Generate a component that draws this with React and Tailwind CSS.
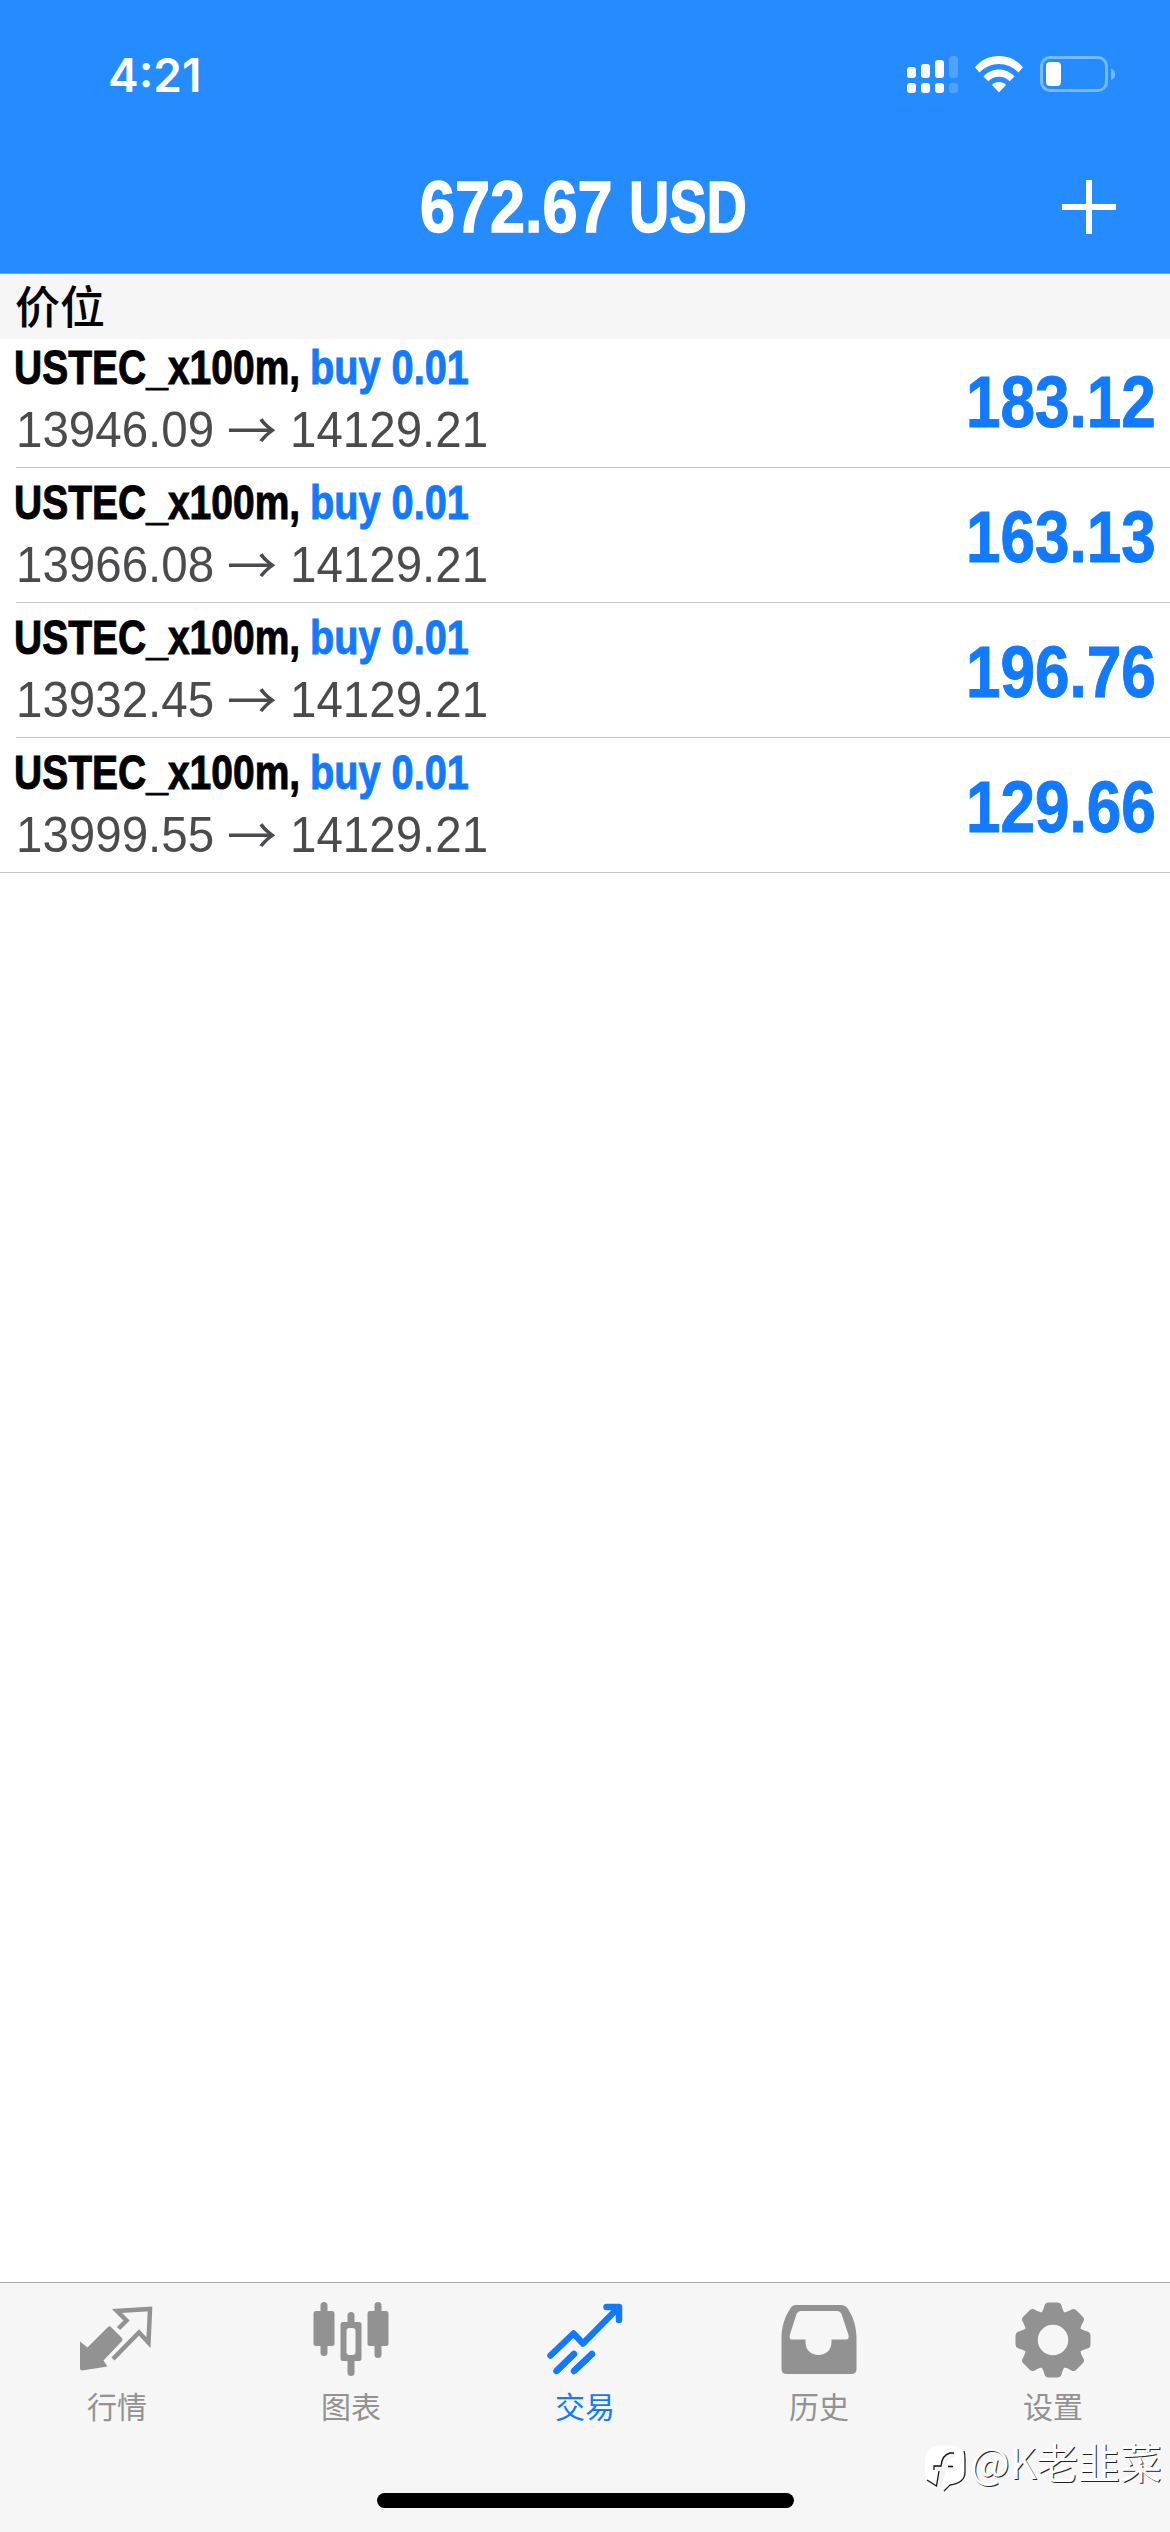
import React from "react";

const positions = [
  { open: "13946.09", now: "14129.21", profit: "183.12" },
  { open: "13966.08", now: "14129.21", profit: "163.13" },
  { open: "13932.45", now: "14129.21", profit: "196.76" },
  { open: "13999.55", now: "14129.21", profit: "129.66" },
];

function Signal() {
  return (
    <svg width="52" height="38" viewBox="0 0 52 38" fill="#fff">
      <rect x="1" y="11" width="9" height="11" rx="3" />
      <rect x="15" y="8" width="9" height="14" rx="3" />
      <rect x="29" y="4" width="9" height="18" rx="3" />
      <rect x="43" y="0" width="9" height="22" rx="3" opacity=".2" />
      <rect x="1" y="27" width="9" height="10" rx="3" />
      <rect x="15" y="27" width="9" height="10" rx="3" />
      <rect x="29" y="27" width="9" height="10" rx="3" />
      <rect x="43" y="27" width="9" height="10" rx="3" opacity=".2" />
    </svg>
  );
}

function Wifi() {
  return (
    <svg width="50" height="38" viewBox="0 -1 50 38" fill="#fff">
      <path d="M1 10.200C7.500 2.700 15.500-1 25-1s17.500 3.700 24 11.200L44.500 15.500C39 10 32.500 7 25 7S11 10 5.500 15.500z" />
      <path d="M9.500 19.500c4.200-4.800 9.500-7 15.500-7s11.300 2.200 15.500 7l-4.800 4.800c-3-3.200-6.700-4.500-10.700-4.500s-7.700 1.300-10.700 4.500z" />
      <path d="M18 28c1.700-2 4-2.900 7-2.900s5.300.9 7 2.900L25 35.500z" />
    </svg>
  );
}

function Battery() {
  return (
    <svg width="76" height="38" viewBox="0 0 76 38">
      <rect x="1.500" y="1.500" width="65" height="33" rx="8.500" fill="none" stroke="#7bb9ff" strokeWidth="3" />
      <path d="M71 12.500c2.600.9 4.200 3 4.200 5.700s-1.600 4.800-4.200 5.700z" fill="#7bb9ff" />
      <rect x="6" y="6" width="15" height="24" rx="4" fill="#fff" />
    </svg>
  );
}

function QuotesIcon() {
  return (
    <svg width="76" height="76" viewBox="0 -4.500 76 76">
      <path d="M1 35 8.500 41 29 20.500Q30.500 19 32 20.500L43 31.500Q44 33 43 34.500L24.500 54 28.500 60 3 64Q1 64 1 62z" fill="#929292" />
      <path d="M39.500 22 47.500 14 38 4.500 71 2.500 69.500 36 60 26 34 52.500" fill="none" stroke="#929292" strokeWidth="4.500" />
    </svg>
  );
}

function ChartIcon() {
  return (
    <svg width="76" height="76" viewBox="0 0 76 76" fill="#929292">
      <rect x="7.500" y="0" width="7" height="54" rx="3.500" />
      <rect x="0.500" y="9" width="21" height="35" rx="2.500" />
      <rect x="61.500" y="0" width="7" height="56" rx="3.500" />
      <rect x="54.500" y="9" width="21" height="35" rx="2.500" />
      <rect x="34.500" y="10" width="7" height="64" rx="3.500" />
      <rect x="27.500" y="20" width="21" height="39" rx="2.500" />
      <rect x="33.500" y="26" width="9" height="27" rx="3" fill="#f6f6f6" />
    </svg>
  );
}

function TradeIcon() {
  return (
    <svg width="76" height="76" viewBox="0 0 76 76" fill="none" stroke="#117aff" strokeWidth="6.500" strokeLinecap="round" strokeLinejoin="round">
      <path d="M3.500 53.500 26.500 31.500 36 41.500 71 6" />
      <path d="M59.500 5H72V18" />
      <path d="M9.500 69 28 51M27 69 46 51" strokeLinecap="butt" />
      <path d="M9.500 69 27 52M27 69 45 52" />
    </svg>
  );
}

function HistoryIcon() {
  return (
    <svg width="76" height="76" viewBox="0 0 76 76">
      <path fillRule="evenodd" d="M15 3H60C63 3 65 4 67 7 72.500 15 75.500 26 75.500 36V67Q75.500 72 70.500 72H5.500Q.5 72 .5 67V36C.5 26 3.500 15 9 7 11 4 12 3 15 3zM20 9Q17 9 15.500 12L8.800 33Q8 37.500 11 37.500H24.500V40C24.500 48 30 53 37.500 53S50.500 48 50.500 40V37.500H65Q68.500 37.500 67.500 33L60.500 12Q59 9 56 9z" fill="#929292" />
    </svg>
  );
}

function SettingsIcon() {
  return (
    <svg width="76" height="76" viewBox="-38 -38 76 76">
      <circle r="22" fill="none" stroke="#929292" strokeWidth="13.500" />
      <g fill="#929292">
        {[0, 45, 90, 135, 180, 225, 270, 315].map((a) => (
          <path key={a} transform={`rotate(${a})`} d="M-12.500-26C-10-29-9.500-31-8.500-34.500Q-7.500-37.500-4.500-37.500H4.500Q7.500-37.500 8.500-34.500C9.500-31 10-29 12.500-26z" />
        ))}
      </g>
    </svg>
  );
}

const tabs = [
  { label: "行情", Icon: QuotesIcon },
  { label: "图表", Icon: ChartIcon },
  { label: "交易", Icon: TradeIcon, active: true },
  { label: "历史", Icon: HistoryIcon },
  { label: "设置", Icon: SettingsIcon },
];

function PositionRow({ position }) {
  return (
    <li className="ml-4 border-b border-[#c4c4c6] pt-[5px] first:pt-0 last:ml-0 last:pl-4">
      <div className="flex h-[129px] justify-between">
        <div>
          <div className="flex h-[60px] items-center text-[49px] leading-[58px] font-bold whitespace-nowrap">
            <span className="w-[296px] origin-left -translate-x-[2px] -translate-y-px scale-x-[0.796] text-black [-webkit-text-stroke:1px]">USTEC_x100m,</span>
            <span className="origin-left -translate-x-[2px] -translate-y-px scale-x-[0.81] text-[#117aff] [-webkit-text-stroke:1px]">buy 0.01</span>
          </div>
          <div className="flex h-[64px] items-center text-[50px] leading-[64px] whitespace-nowrap text-[#4b4b4d]">
            <span className="w-[211px] origin-left scale-x-[0.95]">{position.open}</span>
            <span className="w-[63px] -translate-y-[3px] font-['Noto_Sans_CJK_SC',sans-serif] font-normal">→</span>
            <span className="origin-left scale-x-[0.95]">{position.now}</span>
          </div>
        </div>
        <div className="origin-right scale-x-[0.85] pr-[17px] text-[73px] leading-[128px] font-bold text-[#117aff] [-webkit-text-stroke:1px]">{position.profit}</div>
      </div>
    </li>
  );
}

export default function App() {
  return (
    <div className="flex h-[2532px] w-[1170px] flex-col overflow-hidden bg-white font-['Liberation_Sans','Noto_Sans_CJK_SC',sans-serif]">
      <header className="h-[274px] border-b border-[#7da0cc] bg-[#248cff] text-white">
        <div className="flex h-[149px] items-center justify-between pr-[54px] pl-[108px]">
          <span className="font-['Inter'] text-[46px] leading-none font-semibold">4:21</span>
          <div className="flex items-center gap-4">
            <Signal />
            <Wifi />
            <Battery />
          </div>
        </div>
        <div className="flex h-[115px] items-center justify-between pr-[54px] pl-[420px]">
          <h1 className="flex text-[73px] leading-none font-bold whitespace-nowrap [-webkit-text-stroke:1.500px]">
            <span className="w-[209px] origin-left scale-x-[0.862]">672.67&nbsp;</span>
            <span className="origin-left scale-x-[0.765]">USD</span>
          </h1>
          <svg width="54" height="54" viewBox="0 0 54 54">
            <path d="M27 0V54M0 27H54" stroke="#fff" strokeWidth="6" />
          </svg>
        </div>
      </header>
      <h2 className="h-[65px] bg-[#f6f6f6] pl-[15px] font-['Noto_Sans_CJK_SC',sans-serif] text-[45px] leading-[61px] font-medium text-black">价位</h2>
      <ul className="-mt-px grow">
        {positions.map((p) => (
          <PositionRow key={p.open} position={p} />
        ))}
      </ul>
      <footer className="relative h-[250px] border-t border-[#a9a9ab] bg-[#f6f6f6]">
        <nav className="grid grid-cols-5 pt-[19px]">
          {tabs.map(({ label, Icon, active }) => (
            <div key={label} className={active ? "flex flex-col items-center text-[#117aff]" : "flex flex-col items-center text-[#929292]"}>
              <Icon />
              <span className="mt-[5px] font-['Noto_Sans_CJK_SC',sans-serif] text-[30px] leading-[44px]">{label}</span>
            </div>
          ))}
        </nav>
        <div className="absolute top-[210px] left-[377px] h-[15px] w-[417px] rounded-full bg-black" />
        <div className="absolute top-[153px] left-[924px] flex items-start text-white">
          <svg className="mt-[10px]" width="46" height="48" viewBox="8 17 46 48" fill="none">
            <path d="M22 17H37Q49 18 49 30V43Q48 54 37 56L28 62 30 57H22Q9 55 9 43V30Q10 18 22 17z" fill="#fff" />
            <path d="M39 26H36Q29 26 28 38L23 57M20 39H38" stroke="#f3f3f3" strokeWidth="5" />
            <path d="M48 22Q49 25 49 30V43Q49 54 34 56L28 62" stroke="#222" strokeWidth="1.300" />
            <path d="M38 24H34Q26 26 25 37H18V41M32 37.500H37M23 42 20.500 57 11 51" stroke="#111" strokeWidth="1.300" />
          </svg>
          <span className="font-['Noto_Sans_CJK_SC',sans-serif] text-[42px] leading-[50px] tracking-[-0.3px] whitespace-nowrap [text-shadow:1px_1px_0_#222]">@K老韭菜</span>
        </div>
      </footer>
    </div>
  );
}
